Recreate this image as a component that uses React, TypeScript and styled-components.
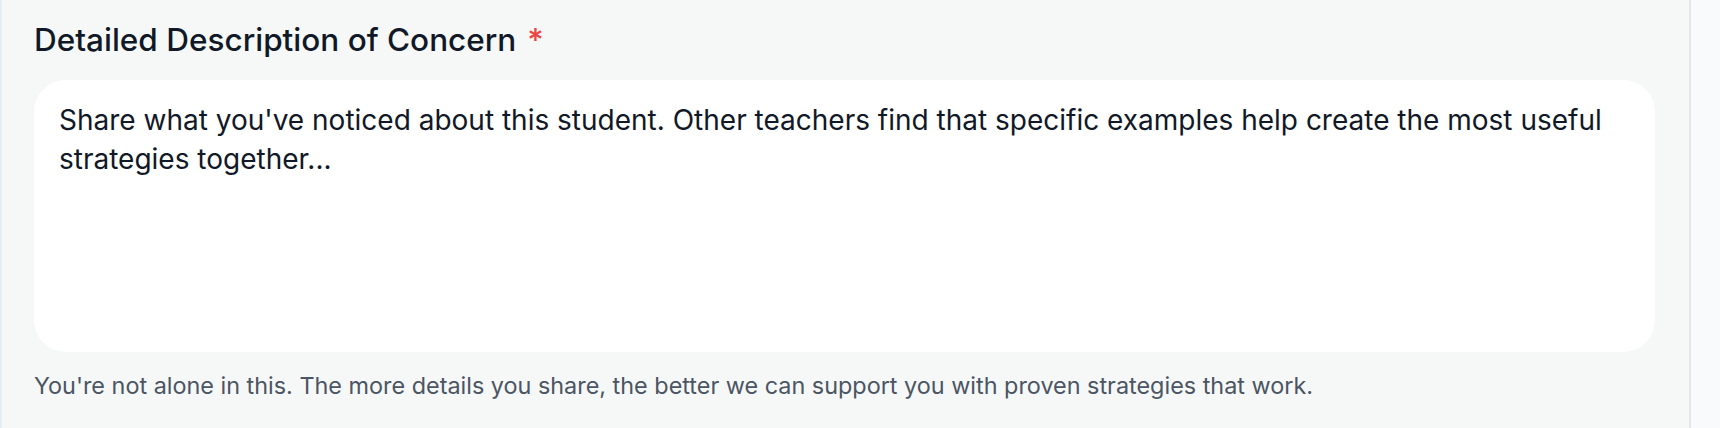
import React from "react";
import styled, { createGlobalStyle } from "styled-components";

const Global = createGlobalStyle`
  html, body { margin: 0; padding: 0; }
  body {
    background: #f8fafc;
    font-family: Inter, "Noto Sans", sans-serif;
    -webkit-font-smoothing: antialiased;
  }
`;

const Page = styled.div`
  display: flex;
  height: 428px;
  width: 1720px;
  background: #f8fafc;
`;

const Panel = styled.section`
  box-sizing: border-box;
  width: 1691px;
  height: 100%;
  background: #f6f8f8;
  border-left: 2px solid #e6edf2;
  border-right: 2px solid #e2e8ee;
  padding: 21px 34px 0 32px;
  display: flex;
  flex-direction: column;
`;

const Label = styled.label`
  font-size: 31.5px;
  line-height: 38px;
  font-weight: 500;
  color: #111827;
  margin-bottom: 21px;
`;

const Required = styled.span`
  color: #ef4444;
  margin-left: 11px;
`;

const TextArea = styled.textarea`
  box-sizing: border-box;
  width: 100%;
  height: 272px;
  border: 1px solid transparent;
  border-radius: 32px;
  background: #ffffff;
  padding: 20px 24px;
  font-family: Inter, "Noto Sans", sans-serif;
  font-size: 28px;
  line-height: 38.5px;
  color: #111827;
  resize: none;
  outline: none;
  &::placeholder {
    color: #111827;
    opacity: 1;
  }
`;

const Hint = styled.p`
  margin: 17px 0 0;
  font-size: 23.4px;
  line-height: 33px;
  color: #4b5563;
`;

export default function App() {
  return (
    <>
      <Global />
      <Page>
        <Panel>
          <Label htmlFor="concern">
            Detailed Description of Concern<Required>*</Required>
          </Label>
          <TextArea
            id="concern"
            placeholder="Share what you've noticed about this student. Other teachers find that specific examples help create the most useful strategies together..."
          />
          <Hint>
            You're not alone in this. The more details you share, the better we can support you with proven strategies that work.
          </Hint>
        </Panel>
      </Page>
    </>
  );
}
